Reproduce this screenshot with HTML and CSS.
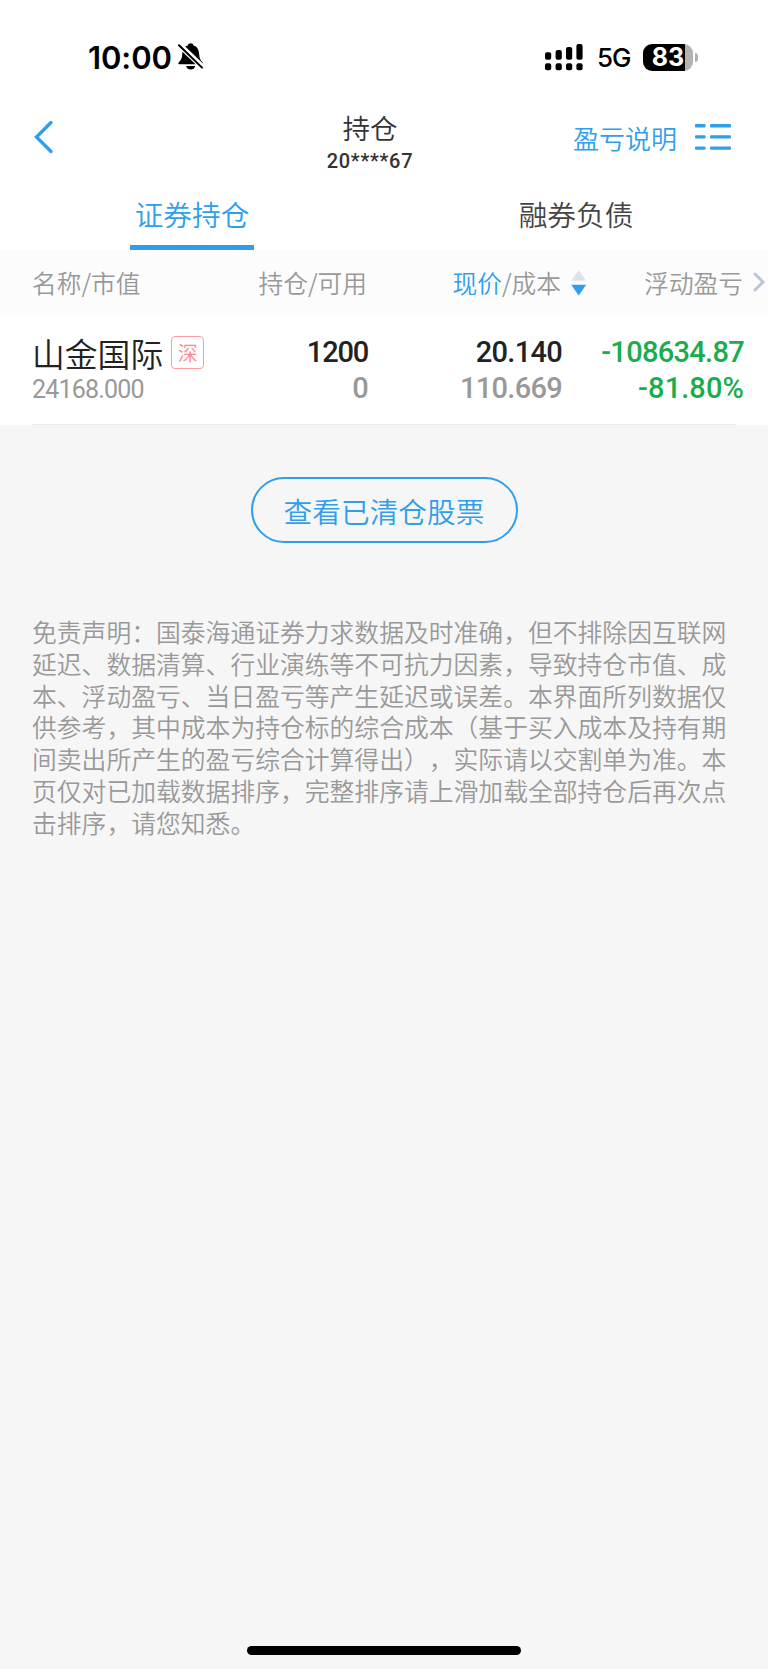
FILE: index.html
```html
<!DOCTYPE html>
<html lang="zh-CN">
<head>
  <meta charset="UTF-8">
  <meta name="viewport" content="width=device-width, initial-scale=1.0">
  <title>持仓</title>
  <link rel="stylesheet" href="styles.css">
</head>
<body>

<!-- Status bar -->
<div class="status">
  <span class="time">10:00</span>
  <svg class="bell" width="26" height="28" viewBox="0 0 26 28">
    <path d="M1.2 21.2c-1-.1-1.200-1-.5-1.800C3 17.200 4 15.500 4.200 11.500C4.500 6.500 6.300 3.600 9.800 2.600C10.200 1 11.200.2 12.700.2s2.500.8 2.900 2.400c3.500 1 5.300 3.900 5.600 8.900.2 4 1.200 5.700 3.500 7.900.7.800.5 1.700-.5 1.800z"/>
    <path d="M8.200 23h9c-.5 2.300-2.200 3.600-4.500 3.600S8.700 25.300 8.200 23z"/>
    <path d="M0 0.500L25 24.500" stroke="#fff" stroke-width="5.600"/>
    <path d="M1 2.200L24 24.600" stroke="#000" stroke-width="2" stroke-linecap="round"/>
  </svg>
  <svg class="signal" width="38" height="27" viewBox="0 0 38 27">
    <rect x="0" y="8.300" width="6.200" height="7.400" rx="2"/>
    <rect x="10.600" y="6" width="6.200" height="9.700" rx="2"/>
    <rect x="21" y="3" width="6.200" height="12.700" rx="2"/>
    <rect x="31.400" y="0" width="6.200" height="15.700" rx="2"/>
    <rect x="0" y="19.300" width="6.200" height="7" rx="2"/>
    <rect x="10.600" y="19.300" width="6.200" height="7" rx="2"/>
    <rect x="21" y="19.300" width="6.200" height="7" rx="2"/>
    <rect x="31.400" y="19.300" width="6.200" height="7" rx="2"/>
  </svg>
  <span class="network">5G</span>
  <div class="battery"><span>83</span></div>
  <div class="battery-tip"></div>
</div>

<!-- Header -->
<header>
  <svg class="back" width="20" height="34" viewBox="0 0 20 34">
    <path d="M17 2.500L2.500 17L17 31.500" fill="none" stroke="#2f9eec" stroke-width="3.400" stroke-linecap="round"/>
  </svg>
  <div class="title">
    <h1>持仓</h1>
    <p>20****67</p>
  </div>
  <div class="actions">
    <a>盈亏说明</a>
    <svg width="36" height="28" viewBox="0 0 36 28" fill="#2f9eec">
      <rect x="0" y="1" width="10.500" height="3.400" rx="1"/>
      <rect x="15" y="1" width="21" height="3.400" rx="1"/>
      <rect x="0" y="12.200" width="10.500" height="3.400" rx="1"/>
      <rect x="15" y="12.200" width="21" height="3.400" rx="1"/>
      <rect x="0" y="23.400" width="10.500" height="3.400" rx="1"/>
      <rect x="15" y="23.400" width="21" height="3.400" rx="1"/>
    </svg>
  </div>
</header>

<nav class="tabs">
  <a class="tab active">证券持仓</a>
  <a class="tab">融券负债</a>
</nav>

<!-- Positions table -->
<div class="grid table-head">
  <span>名称/市值</span>
  <span class="right">持仓/可用</span>
  <span class="right"><b>现价</b>/成本</span>
  <svg class="sort" width="16" height="26" viewBox="0 0 16 26">
    <path d="M7.700 0L15.200 10.700H0.200z" fill="#dbe4ec"/>
    <path d="M0.200 14.800h15L7.700 25.500z" fill="#2f9eec"/>
  </svg>
  <span class="right">浮动盈亏</span>
  <svg class="more" width="12" height="20" viewBox="0 0 12 20">
    <path d="M2 2L10 10L2 18" fill="none" stroke="#b7c5d6" stroke-width="3" stroke-linecap="round"/>
  </svg>
</div>

<div class="grid row">
  <div>
    <div class="name">山金国际<span class="tag">深</span></div>
    <div class="value">24168.000</div>
  </div>
  <div class="num">
    <div class="count">1200</div>
    <div class="gray">0</div>
  </div>
  <div class="num">
    <div>20.140</div>
    <div class="gray">110.669</div>
  </div>
  <div class="num loss">
    <div>-108634.87</div>
    <div class="percent">-81.80%</div>
  </div>
</div>

<a class="cleared">查看已清仓股票</a>

<p class="disclaimer">免责声明：国泰海通证券力求数据及时准确，但不排除因互联网<br>延迟、数据清算、行业演练等不可抗力因素，导致持仓市值、成<br>本、浮动盈亏、当日盈亏等产生延迟或误差。本界面所列数据仅<br>供参考，其中成本为持仓标的综合成本（基于买入成本及持有期<br>间卖出所产生的盈亏综合计算得出），实际请以交割单为准。本<br>页仅对已加载数据排序，完整排序请上滑加载全部持仓后再次点<br>击排序，请您知悉。</p>

<div class="home-bar"></div>

</body>
</html>
```

FILE: styles.css
```css
* { box-sizing: border-box; }
body {
  margin: 0;
  height: 1669px;
  display: flex;
  flex-direction: column;
  background: #f6f6f6;
  color: #333;
  font-family: 'Noto Sans CJK SC', sans-serif;
  font-weight: 350;
  text-spacing-trim: space-all;
  overflow: hidden;
}
h1, p { margin: 0; font-weight: 350; }

/* status bar */
.status {
  display: flex;
  align-items: center;
  flex: none;
  height: 114px;
  padding-left: 88px;
  background: #fff;
  color: #000;
  font-family: Inter, sans-serif;
}
.time {
  width: 90px;
  font-size: 31px;
  font-weight: 600;
  letter-spacing: -0.1px;
}
.bell { margin-right: 341px; }
.network {
  width: 46px;
  margin-left: 14px;
  font-size: 26px;
  font-weight: 500;
  letter-spacing: -1px;
}
.battery {
  width: 50px;
  height: 27px;
  border-radius: 9px;
  background: linear-gradient(90deg, #000 42px, #b3b3b3 42px);
  color: #fff;
  font-size: 25px;
  font-weight: 700;
  line-height: 27px;
  text-align: center;
}
.battery-tip {
  width: 3px;
  height: 9px;
  margin-left: 2px;
  border-radius: 0 4px 4px 0;
  background: #b3b3b3;
}

/* header */
header {
  display: grid;
  grid-template-columns: 291px 90px 1fr;
  flex: none;
  height: 66px;
  padding: 0 37px 0 34px;
  background: #fff;
}
.back { margin-top: 6px; }
.title {
  text-align: center;
  white-space: nowrap;
}
.title h1 {
  font-size: 27.5px;
  line-height: 27px;
}
.title p {
  font-family: Roboto, sans-serif;
  font-size: 20px;
  font-weight: 500;
  letter-spacing: 0.7px;
  line-height: 40px;
}
.actions {
  display: flex;
  justify-content: flex-end;
  align-items: center;
  gap: 18px;
  height: 46px;
  color: #2f9eec;
  font-size: 26px;
}

/* tabs */
.tabs {
  display: flex;
  flex: none;
  height: 70px;
  background: #fff;
}
.tab {
  width: 124px;
  margin: 0 130px;
  text-align: center;
  white-space: nowrap;
  font-size: 28.7px;
  line-height: 68px;
  color: #444;
}
.tab.active {
  color: #2f9eec;
  border-bottom: 5px solid #2f9eec;
}

/* table */
.grid {
  display: grid;
  grid-template-columns: 200px 136px 194px 182px;
  flex: none;
  padding-left: 32px;
}
.right { text-align: right; }
.table-head {
  grid-template-columns: 200px 135px 194px 26px 156px 22px;
  align-items: center;
  height: 63px;
  background: #fcfcfc;
  color: #999;
  font-size: 24.7px;
  white-space: nowrap;
}
.table-head b {
  font-weight: 350;
  color: #2f9eec;
}
.sort, .more { justify-self: end; }
.sort { margin-top: 2px; }
.row {
  height: 112px;
  padding-top: 21px;
  background: linear-gradient(#ececec, #ececec) 32px 111px / 704px 1px no-repeat #fff;
}
.name {
  display: flex;
  align-items: center;
  gap: 8px;
  height: 37px;
  font-size: 32.8px;
  line-height: 33px;
  color: #222;
  white-space: nowrap;
}
.tag {
  width: 33px;
  height: 33px;
  margin-top: -1px;
  border: 1px solid #ff9aa2;
  border-radius: 4px;
  color: #ff8890;
  font-size: 20px;
  line-height: 31px;
  text-align: center;
}
.value {
  font-family: Roboto, sans-serif;
  font-size: 25px;
  font-weight: 400;
  letter-spacing: -0.8px;
  line-height: 38px;
  color: #999;
}
.num {
  font-family: Roboto, sans-serif;
  font-size: 29px;
  font-weight: 500;
  letter-spacing: -0.7px;
  line-height: 36px;
  text-align: right;
  color: #222;
}
.count { letter-spacing: -1.2px; }
.gray { color: #999; }
.loss { color: #1aad4b; }
.percent { letter-spacing: 0.1px; }

.cleared {
  align-self: center;
  width: 267px;
  height: 66px;
  margin-top: 52px;
  border: 2px solid #2f9eec;
  border-radius: 33px;
  color: #2f9eec;
  font-size: 28.7px;
  line-height: 64px;
  text-align: center;
}
.disclaimer {
  margin: 73px 0 0 32px;
  color: #999;
  font-size: 24.8px;
  line-height: 31.8px;
  white-space: nowrap;
}
.home-bar {
  align-self: center;
  width: 274px;
  height: 9px;
  margin: auto 0 14px;
  border-radius: 5px;
  background: #000;
}
```
